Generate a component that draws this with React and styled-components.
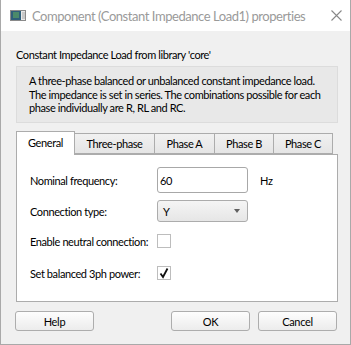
import React from "react";
import styled, { createGlobalStyle } from "styled-components";

const Global = createGlobalStyle`
  html, body { margin: 0; padding: 0; background: #fff; }
  body { font-family: Lato, "Noto Sans", sans-serif; }
  * { box-sizing: border-box; }
`;

const Window = styled.div`
  width: 351px;
  height: 345px;
  display: flex;
  flex-direction: column;
  border: 1px solid #a9a9a9;
  border-top: none;
  background: #f0f0f0;
  overflow: hidden;
`;

const TitleBar = styled.div`
  height: 31px;
  background: #fff;
  display: flex;
  align-items: center;
  padding: 0 0 0 9px;
  flex: none;
`;

const AppIcon = styled.svg`
  flex: none;
`;

const TitleText = styled.div`
  flex: 1;
  min-width: 0;
  margin-left: 6px;
  font-size: 13px;
  letter-spacing: -0.45px;
  color: #9a9a9a;
  white-space: nowrap;
`;

const CloseBox = styled.div`
  flex: none;
  width: 19px;
  height: 31px;
  display: flex;
  align-items: center;
  justify-content: flex-start;
`;

const Body = styled.div`
  flex: 1;
  display: flex;
  flex-direction: column;
  padding: 15px 12px 0 15px;
  font-size: 11px;
  letter-spacing: -0.4px;
  color: #000;
  white-space: nowrap;
`;

const Heading = styled.div`
  height: 18px;
  line-height: 18px;
`;

const DescBox = styled.div`
  margin-top: 2px;
  background: #e8e8e8;
  border: 1px solid #dcdcdc;
  padding: 7px 12px 0 12px;
  line-height: 13.5px;
  height: 57px;
  color: #000;
`;

const TabBar = styled.div`
  display: flex;
  align-items: flex-end;
  margin-top: 8px;
  height: 23px;
  position: relative;
  z-index: 1;
`;

const Tab = styled.div`
  width: ${(p) => p.w}px;
  height: ${(p) => (p.active ? 24 : 21)}px;
  margin-bottom: ${(p) => (p.active ? -1 : 0)}px;
  background: ${(p) => (p.active ? "#fff" : "linear-gradient(#f1f1f1, #e5e5e5)")};
  border: 1px solid #acacac;
  border-bottom: ${(p) => (p.active ? "none" : "1px solid #acacac")};
  margin-left: ${(p) => (p.first ? 0 : -1)}px;
  display: flex;
  align-items: center;
  justify-content: center;
  padding-bottom: ${(p) => (p.active ? 3 : 0)}px;
`;

const Panel = styled.div`
  height: 148px;
  background: #fff;
  border: 1px solid #acacac;
  padding: 12px 0 0 13px;
  display: flex;
  flex-direction: column;
`;

const Row = styled.div`
  display: flex;
  align-items: center;
  height: ${(p) => p.h}px;
  margin-top: ${(p) => p.mt || 0}px;
`;

const Label = styled.div`
  width: 127px;
  flex: none;
`;

const TextInput = styled.div`
  width: 91px;
  height: 26px;
  border: 1px solid #a8a8a8;
  border-radius: 3px;
  background: #fff;
  display: flex;
  align-items: center;
  padding-left: 2px;
`;

const Unit = styled.div`
  margin-left: 12px;
`;

const Select = styled.div`
  width: 91px;
  height: 22px;
  border: 1px solid #acacac;
  border-radius: 3px;
  background: linear-gradient(#f5f5f5, #e6e6e6);
  display: flex;
  align-items: center;
  justify-content: space-between;
  padding: 0 7px 0 5px;
`;

const Arrow = styled.div`
  width: 0;
  height: 0;
  border-left: 3.5px solid transparent;
  border-right: 3.5px solid transparent;
  border-top: 4px solid #606060;
`;

const Check = styled.div`
  width: 14px;
  height: 14px;
  border: 1px solid #bdbdbd;
  background: #fff;
  display: flex;
  align-items: center;
  justify-content: center;
`;

const Footer = styled.div`
  display: flex;
  align-items: center;
  margin-top: 9px;
  margin-left: -1px;
  height: 20px;
`;

const Button = styled.button`
  width: 79px;
  height: 20px;
  border: 1px solid #adadad;
  border-radius: 3px;
  background: linear-gradient(#fdfdfd, #ececec);
  font-family: inherit;
  font-size: 11px;
  letter-spacing: -0.3px;
  color: #000;
  padding: 0;
  margin-left: ${(p) => p.ml || 0}px;
`;

const CheckMark = () => (
  <svg width="12" height="12" viewBox="0 0 12 12">
    <path d="M2.5 6.5 L5 10 L9.5 1.5" fill="none" stroke="#111" strokeWidth="1.8" />
  </svg>
);

export default function App() {
  return (
    <>
      <Global />
      <Window>
        <TitleBar>
          <AppIcon width="16" height="11" viewBox="0 0 16 11">
            <rect x="0.5" y="0.5" width="15" height="10" fill="#e8e8e8" stroke="#8a8a8a" />
            <rect x="1" y="1" width="10" height="9" fill="#2f5f7a" />
            <rect x="3" y="2" width="6" height="6" fill="#4b8a6a" />
            <rect x="12" y="2" width="3" height="7" fill="#c8c8c8" />
          </AppIcon>
          <TitleText>Component (Constant Impedance Load1) properties</TitleText>
          <CloseBox>
            <svg width="11" height="11" viewBox="0 0 11 11">
              <path d="M0.5 0.5 L10.5 10.5 M10.5 0.5 L0.5 10.5" stroke="#888" strokeWidth="1.1" />
            </svg>
          </CloseBox>
        </TitleBar>
        <Body>
          <Heading>Constant Impedance Load from library 'core'</Heading>
          <DescBox>
            A three-phase balanced or unbalanced constant impedance load.
            <br />
            The impedance is set in series. The combinations possible for each
            <br />
            phase individually are R, RL and RC.
          </DescBox>
          <TabBar>
            <Tab first active w={59}>General</Tab>
            <Tab w={81}>Three-phase</Tab>
            <Tab w={61}>Phase A</Tab>
            <Tab w={60}>Phase B</Tab>
            <Tab w={60}>Phase C</Tab>
          </TabBar>
          <Panel>
            <Row h={26}>
              <Label>Nominal frequency:</Label>
              <TextInput>60</TextInput>
              <Unit>Hz</Unit>
            </Row>
            <Row h={22} mt={7}>
              <Label>Connection type:</Label>
              <Select>
                <span>Y</span>
                <Arrow />
              </Select>
            </Row>
            <Row h={14} mt={12}>
              <Label>Enable neutral connection:</Label>
              <Check />
            </Row>
            <Row h={14} mt={18}>
              <Label>Set balanced 3ph power:</Label>
              <Check>
                <CheckMark />
              </Check>
            </Row>
          </Panel>
          <Footer>
            <Button>Help</Button>
            <Button ml={77}>OK</Button>
            <Button ml={8}>Cancel</Button>
          </Footer>
        </Body>
      </Window>
    </>
  );
}
